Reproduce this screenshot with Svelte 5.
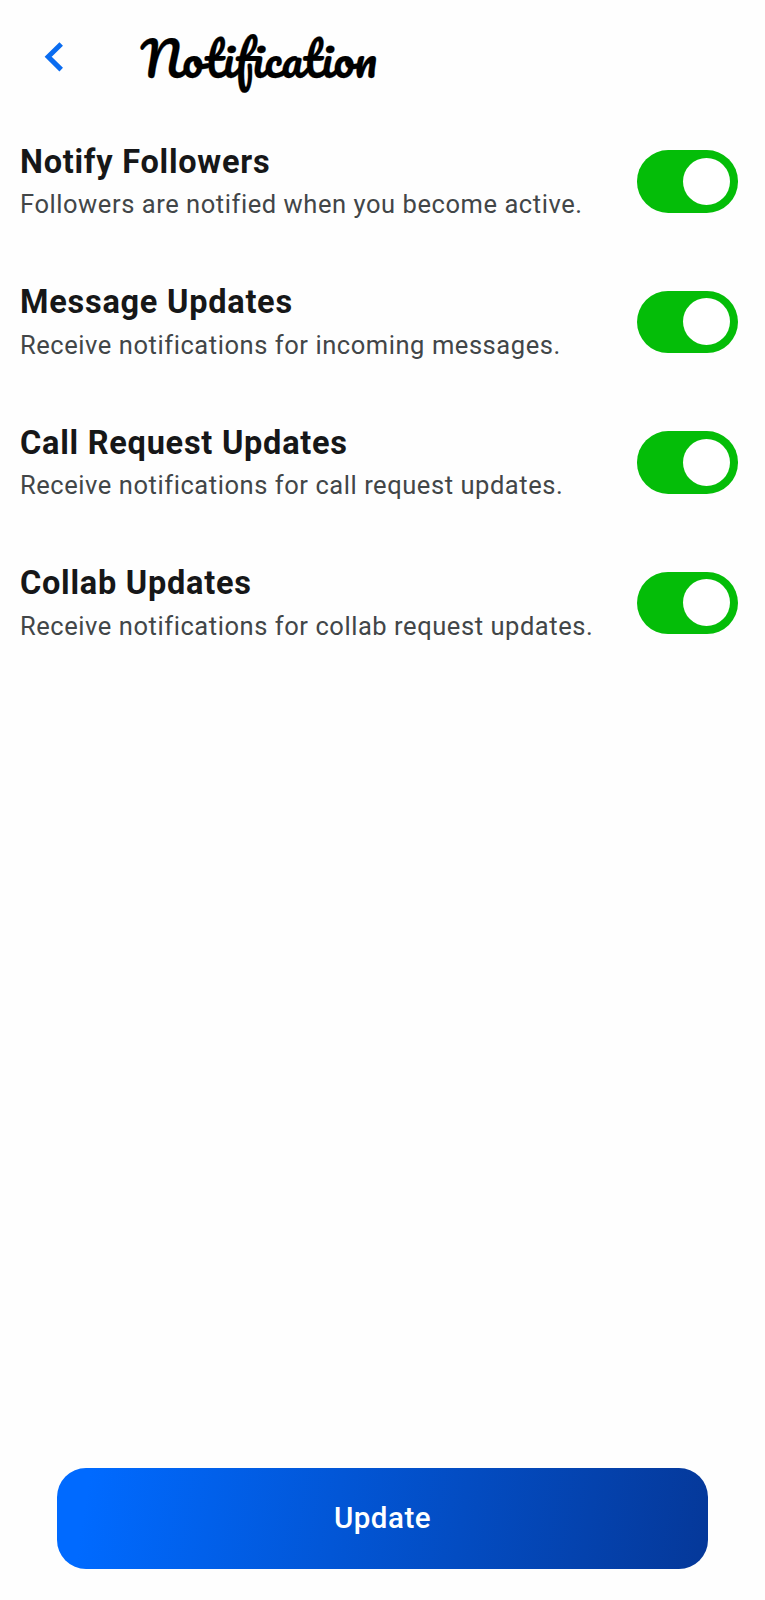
<script>
  let items = $state([
    { title: 'Notify Followers', text: 'Followers are notified when you become active.', on: true },
    { title: 'Message Updates', text: 'Receive notifications for incoming messages.', on: true },
    { title: 'Call Request Updates', text: 'Receive notifications for call request updates.', on: true },
    { title: 'Collab Updates', text: 'Receive notifications for collab request updates.', on: true }
  ]);
</script>

<div class="screen">
  <header>
    <button class="back" aria-label="Back">
      <svg width="20" height="32" viewBox="0 0 20 32"><path d="M17.2 3 L4.2 15.8 L17.2 28.6" fill="none" stroke="#0a6cf0" stroke-width="5" /></svg>
    </button>
    <h1>Notification</h1>
  </header>
  <main>
    {#each items as item}
      <section>
        <div class="copy">
          <h2>{item.title}</h2>
          <p>{item.text}</p>
        </div>
        <button class="toggle" class:on={item.on} role="switch" aria-checked={item.on} aria-label={item.title} onclick={() => (item.on = !item.on)}>
          <span></span>
        </button>
      </section>
    {/each}
  </main>
  <footer><button class="update">Update</button></footer>
</div>

<style>
  :global(body) { margin: 0; background: #fefefe; }
  .screen { display: flex; flex-direction: column; height: 1600px; box-sizing: border-box; background: #fefefe; font-family: Roboto, sans-serif; }
  button { border: 0; padding: 0; background: none; font-family: inherit; }
  header { display: flex; height: 114px; padding-left: 44px; box-sizing: border-box; }
  .back { width: 20px; height: 32px; margin-top: 41px; }
  svg { display: block; }
  h1 { margin: 26px 0 0 76.5px; font: 400 47px/64px Pacifico, "Brush Script MT", cursive; color: #000; white-space: nowrap; -webkit-text-stroke: .25px #000; }
  main { flex: 1; }
  section { display: flex; justify-content: space-between; height: 140.5px; padding: 28.5px 27px 0 20px; box-sizing: border-box; }
  h2 { margin: 0; font-size: 32.5px; line-height: 38px; font-weight: 700; letter-spacing: .75px; color: #161718; white-space: nowrap; }
  p { margin: 6.5px 0 0; font-size: 25.5px; line-height: 34px; letter-spacing: .56px; color: #424648; white-space: nowrap; }
  .toggle { display: flex; flex: none; align-items: center; width: 101.5px; height: 62.5px; margin-top: 7.5px; padding: 8px; box-sizing: border-box; border-radius: 31.25px; background: #aaa; }
  .toggle.on { justify-content: flex-end; background: #04bd08; }
  .toggle span { width: 47px; height: 47px; border-radius: 50%; background: #fff; }
  footer { padding: 0 57px 31px; }
  .update { display: block; width: 651px; height: 101px; padding-bottom: 2px; border-radius: 29px; background: linear-gradient(98.8deg, #006aff 5%, #053899 100%); color: #fff; font-size: 29.5px; font-weight: 500; letter-spacing: .5px; }
</style>
